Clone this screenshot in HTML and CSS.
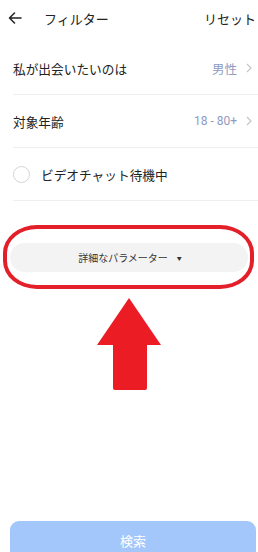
FILE: index.html
```html
<!DOCTYPE html>
<html lang="ja">
<head>
<meta charset="utf-8">
<link rel="stylesheet" href="styles.css">
</head>
<body>
<div class="page">
  <header class="header">
    <svg class="back" width="14" height="12" viewBox="0 0 14 12"><path d="M13 6H1.5M6.5 1L1.5 6l5 5" fill="none" stroke="#222" stroke-width="1.5" stroke-linecap="round" stroke-linejoin="round"/></svg>
    <span class="title">フィルター</span>
    <span class="reset">リセット</span>
  </header>
  <div class="list">
    <div class="row">
      <span class="label">私が出会いたいのは</span>
      <span class="value">男性<svg class="chev" width="6" height="10" viewBox="0 0 6 10"><path d="M1 1l4 4-4 4" fill="none" stroke="#c4c4c4" stroke-width="1.1"/></svg></span>
    </div>
    <div class="row">
      <span class="label">対象年齢</span>
      <span class="value num">18 - 80+<svg class="chev" width="6" height="10" viewBox="0 0 6 10"><path d="M1 1l4 4-4 4" fill="none" stroke="#c4c4c4" stroke-width="1.1"/></svg></span>
    </div>
    <div class="row">
      <span class="radio"></span>
      <span class="label">ビデオチャット待機中</span>
    </div>
  </div>
  <div class="more">詳細なパラメーター<span class="tri">▼</span></div>
  <button class="search">検索</button>
</div>
<div class="ring"></div>
<svg class="arrow" width="68" height="96" viewBox="0 0 68 96"><path d="M33 1L65 48H51V91Q51 93 49 93H19Q17 93 17 91V48H1Z" fill="#ec1c24"/></svg>
</body>
</html>
```
FILE: styles.css
```css
html, body {
  margin: 0;
  padding: 0;
  background: #fff;
}
body {
  width: 258px;
  height: 552px;
  overflow: hidden;
  position: relative;
  font-family: "Noto Sans CJK JP", "Noto Sans", sans-serif;
  color: #222;
}
.page {
  height: 552px;
  display: flex;
  flex-direction: column;
}
.header {
  height: 36px;
  display: flex;
  align-items: center;
  padding: 0 2px 0 8px;
  font-size: 13px;
}
.back {
  flex: none;
}
.title {
  margin-left: 22px;
  flex: 1;
}
.list {
  margin-top: 6px;
  padding-left: 13px;
}
.row {
  height: 52px;
  border-bottom: 1px solid #efefef;
  display: flex;
  align-items: center;
  padding-right: 6px;
  font-size: 12.7px;
}
.label {
  flex: 1;
}
.value {
  color: #8e9cc0;
  display: flex;
  align-items: center;
  font-size: 12.5px;
}
.value.num {
  font-family: "Roboto", "Noto Sans", sans-serif;
  font-size: 12px;
}
.chev {
  margin-left: 9px;
}
.radio {
  width: 15px;
  height: 15px;
  border: 1px solid #d4d4d4;
  border-radius: 50%;
  margin-right: 11px;
  flex: none;
}
.more {
  margin: 42px 10px 0;
  height: 29px;
  border-radius: 15px;
  background: #f3f3f3;
  display: flex;
  align-items: center;
  justify-content: center;
  font-size: 10px;
  color: #333;
  padding-left: 2px;
}
.tri {
  font-size: 5px;
  margin-left: 9px;
}
.search {
  margin: auto 2px -7px 10px;
  height: 38px;
  border: none;
  border-radius: 9px;
  background: #a3c7fb;
  color: #fff;
  font-family: "Noto Sans CJK JP", sans-serif;
  font-size: 13px;
  flex: none;
}
.ring {
  position: absolute;
  left: 3px;
  top: 225px;
  width: 243px;
  height: 56px;
  border: 4px solid #e3202a;
  border-radius: 34px / 28px;
}
.arrow {
  position: absolute;
  left: 96px;
  top: 297px;
}
```
